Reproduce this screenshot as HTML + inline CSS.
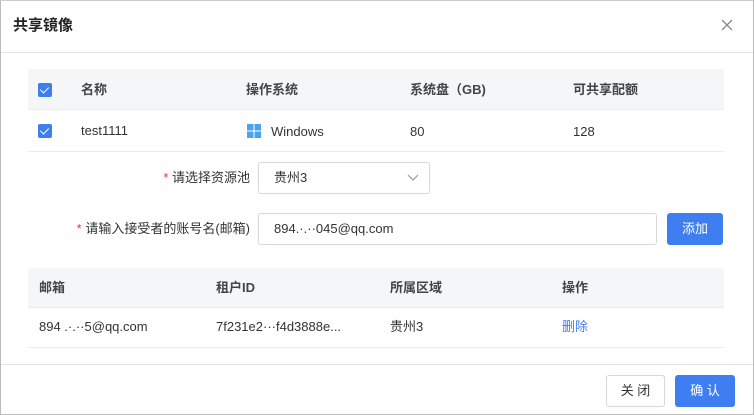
<!DOCTYPE html>
<html><head><meta charset="utf-8"><style>
*{box-sizing:border-box;margin:0;padding:0}
body{width:754px;height:415px;background:#fff;font-family:"Liberation Sans","Noto Sans CJK SC",sans-serif;font-size:13px;color:#333;position:relative;overflow:hidden}
.frame{position:absolute;left:0;top:0;width:754px;height:415px;border:1px solid #bbb;border-top-color:#ccc}
.abs{position:absolute;line-height:18px}
.title{left:13px;top:17px;font-size:15px;font-weight:bold;color:#222}
.hr{left:1px;width:752px;height:1px;background:#e3e4ea}
.th{background:#f5f6f8;height:40px;left:28px;width:696px}
.rowline{left:28px;width:696px;height:1px;background:#eaebee}
.hd{font-weight:bold;color:#444}
.cb{width:14px;height:14px;background:#3f7ef0;border-radius:2px}
.cb:after{content:"";position:absolute;left:4px;top:2px;width:4px;height:7px;border:solid #fff;border-width:0 1.5px 1.5px 0;transform:rotate(45deg)}
.box{border:1px solid #d6d8de;border-radius:3px;background:#fff}
.btn{border-radius:3px;text-align:center;font-size:13px}
.lbl{right:504px;text-align:right;white-space:nowrap}
</style></head><body>
<div class="frame"></div>
<div class="abs title">共享镜像</div>
<svg class="abs" style="left:721px;top:19px" width="12" height="12"><path d="M1 1L11 11M11 1L1 11" stroke="#888" stroke-width="1.3"/></svg>
<div class="abs hr" style="top:52px"></div>

<div class="abs th" style="top:69px"></div>
<div class="abs cb" style="left:38px;top:83px"></div>
<div class="abs hd" style="left:81px;top:81px">名称</div>
<div class="abs hd" style="left:246px;top:81px">操作系统</div>
<div class="abs hd" style="left:410px;top:81px">系统盘（GB)</div>
<div class="abs hd" style="left:573px;top:81px">可共享配额</div>
<div class="abs cb" style="left:38px;top:124px"></div>
<div class="abs" style="left:81px;top:122px">test1111</div>
<svg class="abs" style="left:247px;top:124px" width="14" height="14"><g fill="#4aa3f0"><rect x="0" y="0" width="6.5" height="6.5"/><rect x="7.5" y="0" width="6.5" height="6.5"/><rect x="0" y="7.5" width="6.5" height="6.5"/><rect x="7.5" y="7.5" width="6.5" height="6.5"/></g></svg>
<div class="abs" style="left:271px;top:123px">Windows</div>
<div class="abs" style="left:410px;top:123px">80</div>
<div class="abs" style="left:573px;top:123px">128</div>
<div class="abs rowline" style="top:109px"></div>
<div class="abs rowline" style="top:151px"></div>

<div class="abs lbl" style="top:169px"><span style="color:#e33">*</span> 请选择资源池</div>
<div class="abs box" style="left:258px;top:162px;width:172px;height:32px"></div>
<div class="abs" style="left:274px;top:169px">贵州3</div>
<svg class="abs" style="left:407px;top:174px" width="12" height="8"><path d="M1 1L6 6L11 1" stroke="#999" fill="none" stroke-width="1.2"/></svg>

<div class="abs lbl" style="top:220px"><span style="color:#e33">*</span> 请输入接受者的账号名(邮箱)</div>
<div class="abs box" style="left:258px;top:213px;width:399px;height:32px"></div>
<div class="abs" style="left:274px;top:220px">894.·.··045@qq.com</div>
<div class="abs btn" style="left:667px;top:213px;width:56px;height:32px;background:#3f7ef0;color:#fff;line-height:32px">添加</div>

<div class="abs th" style="top:268px"></div>
<div class="abs hd" style="left:39px;top:279px">邮箱</div>
<div class="abs hd" style="left:216px;top:279px">租户ID</div>
<div class="abs hd" style="left:390px;top:279px">所属区域</div>
<div class="abs hd" style="left:562px;top:279px">操作</div>
<div class="abs rowline" style="top:307px"></div>
<div class="abs" style="left:39px;top:318px">894 .·.··5@qq.com</div>
<div class="abs" style="left:216px;top:318px">7f231e2···f4d3888e...</div>
<div class="abs" style="left:390px;top:318px">贵州3</div>
<div class="abs" style="left:562px;top:318px;color:#3f7ef0">删除</div>
<div class="abs rowline" style="top:347px"></div>

<div class="abs hr" style="top:364px"></div>
<div class="abs btn box" style="left:606px;top:375px;width:59px;height:32px;line-height:30px;color:#333">关 闭</div>
<div class="abs btn" style="left:675px;top:375px;width:60px;height:32px;line-height:32px;background:#3f7ef0;color:#fff">确 认</div>
</body></html>
